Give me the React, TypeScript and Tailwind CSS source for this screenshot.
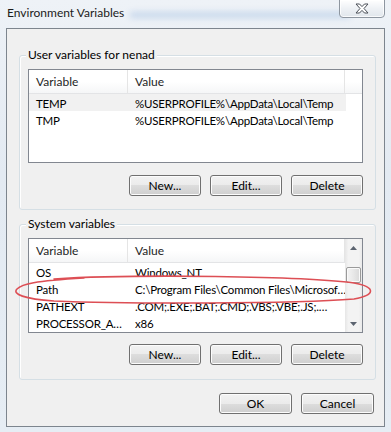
import React from "react";

type Row = { name: string; value: string; selected?: boolean };

const userRows: Row[] = [
  { name: "TEMP", value: "%USERPROFILE%\\AppData\\Local\\Temp", selected: true },
  { name: "TMP", value: "%USERPROFILE%\\AppData\\Local\\Temp" },
];

const systemRows: Row[] = [
  { name: "OS", value: "Windows_NT" },
  { name: "Path", value: "C:\\Program Files\\Common Files\\Microsof…" },
  { name: "PATHEXT", value: ".COM;.EXE;.BAT;.CMD;.VBS;.VBE;.JS;.…" },
  { name: "PROCESSOR_A…", value: "x86" },
];

const btn =
  "h-[21px] rounded-[3px] border border-[#707070] bg-[linear-gradient(#f2f2f2_0%,#ebebeb_50%,#dddddd_50%,#cfcfcf_100%)] shadow-[inset_0_0_0_1px_#fcfcfc] text-[12px] text-black leading-none";

function WinButton({ label }: { label: string }) {
  return <button className={`w-[72px] ${btn}`}>{label}</button>;
}

function ScrollBar() {
  return (
    <div className="w-[17px] shrink-0 flex flex-col bg-[linear-gradient(90deg,#e6e6e6,#f3f3f3_20%,#f3f3f3_80%,#eaeaea)]">
      <div className="h-[17px] flex items-center justify-center">
        <svg width="7" height="4" viewBox="0 0 7 4"><path d="M0 4 L3.5 0 L7 4 Z" fill="#5c6470" /></svg>
      </div>
      <div className="flex-1 flex flex-col items-center">
        <div className="mt-[11px] w-[15px] h-[16px] rounded-[2px] border border-[#9a9a9a] bg-[linear-gradient(90deg,#f4f4f4,#e8e8e8_50%,#d9d9d9)] shadow-[inset_0_0_0_1px_#fafafa]" />
      </div>
      <div className="h-[17px] flex items-center justify-center">
        <svg width="7" height="4" viewBox="0 0 7 4"><path d="M0 0 L3.5 4 L7 0 Z" fill="#5c6470" /></svg>
      </div>
    </div>
  );
}

function VarList({ rows, scroll, height }: { rows: Row[]; scroll?: boolean; height: string }) {
  return (
    <div className={`${height} flex border border-[#828790] bg-white`}>
      <div className="flex-1 min-w-0 flex flex-col">
        <div className="h-[24px] shrink-0 flex border-b border-[#e3e4e6] bg-[linear-gradient(#ffffff,#ffffff_50%,#f5f6f7)]">
          <div className="w-[99px] pl-[7px] pt-[1px] flex items-center border-r border-[#e5e5e5] text-[#1e1e1e]">Variable</div>
          <div className="w-[217px] pl-[7px] pt-[1px] flex items-center border-r border-[#e5e5e5] text-[#1e1e1e]">Value</div>
          <div className="flex-1" />
        </div>
        {rows.map((r) => (
          <div
            key={r.name}
            className={`h-[17px] shrink-0 w-[317px] flex items-center whitespace-nowrap text-black text-[11.5px] tracking-[-0.2px] pt-[2px] ${r.selected ? "bg-[#f1f1f1]" : ""}`}
          >
            <div className="w-[99px] pl-[7px] overflow-hidden">{r.name}</div>
            <div className="w-[218px] pl-[7px] overflow-hidden">{r.value}</div>
          </div>
        ))}
      </div>
      {scroll && <ScrollBar />}
    </div>
  );
}

function GroupBox({ title, children, className }: { title: string; children: React.ReactNode; className?: string }) {
  return (
    <div className={`relative rounded-[3px] border border-[#d5dfe5] shadow-[inset_1px_1px_0_#ffffff] pl-[8px] pr-[12px] ${className ?? ""}`}>
      <span className="absolute left-[6px] top-[-9px] px-[2px] bg-[#f0f0f0] leading-[16px] text-black">{title}</span>
      {children}
    </div>
  );
}

export default function App() {
  return (
    <div className="relative w-[391px] h-[432px] overflow-hidden bg-[linear-gradient(180deg,#eef2f7,#e3eaf2_40%,#e6edf4)] font-['Lato','Noto_Sans',sans-serif] text-[12px] flex flex-col">
      {/* blurred glass behind title */}
      <div className="absolute left-[130px] top-[12px] w-[220px] h-[6px] bg-[#6e9bd2] opacity-30 blur-[3px]" />

      <div className="h-[28px] shrink-0 pl-[7px] pt-[5px] text-[#1b1b1b] leading-[16px] relative">Environment Variables</div>

      <div className="absolute right-[6px] top-[-1px] w-[46px] h-[19px] rounded-b-[4px] border border-[#8e96a0] bg-[linear-gradient(#ffffff,#eef1f5_50%,#e1e6ec)] shadow-[inset_0_0_0_1px_#ffffffcc] flex items-center justify-center">
        <svg width="14" height="11" viewBox="0 0 14 11">
          <path
            d="M1 1 H4.5 L7 3.6 L9.5 1 H13 L9 5.5 L13 10 H9.5 L7 7.4 L4.5 10 H1 L5 5.5 Z"
            fill="#ffffff"
            stroke="#4a4f57"
            strokeWidth="1"
            strokeLinejoin="round"
          />
        </svg>
      </div>

      <div className="mx-[6px] h-[399px] border border-[#7d858e] bg-[#f0f0f0] pl-[12px] pr-[8px] flex flex-col">
        <GroupBox title="User variables for nenad" className="mt-[26px] pt-[13px] pb-[13px]">
          <VarList rows={userRows} height="h-[94px]" />
          <div className="mt-[12px] flex justify-end gap-[9px]">
            <WinButton label="New..." />
            <WinButton label="Edit..." />
            <WinButton label="Delete" />
          </div>
        </GroupBox>

        <GroupBox title="System variables" className="mt-[14px] pt-[13px] pb-[14px]">
          <VarList rows={systemRows} height="h-[95px]" scroll />
          <div className="mt-[11px] flex justify-end gap-[9px]">
            <WinButton label="New..." />
            <WinButton label="Edit..." />
            <WinButton label="Delete" />
          </div>
        </GroupBox>

        <div className="mt-[13px] pr-[2px] flex justify-end gap-[9px]">
          <button className={`w-[73px] ${btn}`}>OK</button>
          <button className={`w-[73px] ${btn}`}>Cancel</button>
        </div>
      </div>

      {/* hand-drawn red ellipse around Path row */}
      <svg className="absolute left-[14px] top-[275px]" width="362" height="30" viewBox="0 0 362 30" fill="none">
        <path
          d="M40 4 C120 -1 290 1 340 8 C362 12 362 20 340 24 C280 29 110 29 40 26 C10 24 -2 19 3 14 C8 9 20 6 70 3"
          stroke="#dd4f55"
          strokeWidth="1.6"
          strokeLinecap="round"
        />
      </svg>
    </div>
  );
}
